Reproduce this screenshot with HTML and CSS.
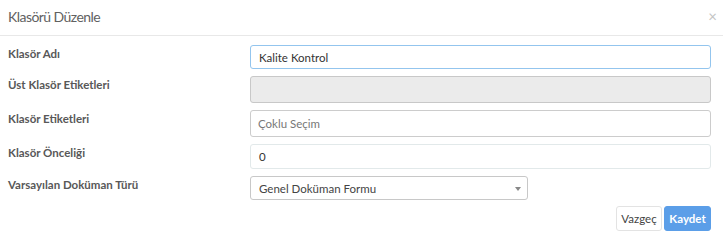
FILE: index.html
```html
<!DOCTYPE html>
<html lang="tr">
<head>
<meta charset="utf-8">
<link rel="stylesheet" href="styles.css">
</head>
<body>
<div class="modal">
  <div class="modal-header">
    <span class="modal-title">Klasörü Düzenle</span>
    <span class="close">×</span>
  </div>
  <div class="modal-body">
    <div class="form-grid">
      <label class="lbl">Klasör Adı</label>
      <div class="field"><div class="input input-focus">Kalite Kontrol</div></div>
      <label class="lbl">Üst Klasör Etiketleri</label>
      <div class="field"><div class="input input-disabled"></div></div>
      <label class="lbl">Klasör Etiketleri</label>
      <div class="field"><div class="input input-tags"><span class="placeholder">Çoklu Seçim</span></div></div>
      <label class="lbl">Klasör Önceliği</label>
      <div class="field"><div class="input input-light">0</div></div>
      <label class="lbl">Varsayılan Doküman Türü</label>
      <div class="field"><div class="input select">Genel Doküman Formu<span class="caret"></span></div></div>
    </div>
    <div class="actions">
      <button class="btn btn-default">Vazgeç</button>
      <button class="btn btn-primary">Kaydet</button>
    </div>
  </div>
</div>
</body>
</html>
```
FILE: styles.css
```css
* { box-sizing: border-box; }
html, body { margin: 0; padding: 0; background: #fff; }
body { font-family: "Lato", "Open Sans", sans-serif; color: #555; }
.modal { width: 723px; }
.modal-header {
  height: 36px;
  border-bottom: 1px solid #e8e8e8;
  display: flex;
  align-items: center;
  justify-content: space-between;
  padding: 0 6px 2px 8px;
}
.modal-title { font-size: 14px; color: #616161; letter-spacing: -0.55px; }
.close { font-size: 15px; color: #c4c4c4; line-height: 1; }
.modal-body { padding: 9px 12px 0 8px; }
.form-grid {
  display: grid;
  grid-template-columns: 242px 1fr;
  row-gap: 7px;
  align-items: start;
}
.lbl {
  font-size: 11.5px;
  font-weight: 700;
  color: #585858;
  line-height: 18px;
}
.field { display: flex; }
.input {
  width: 100%;
  border: 1px solid #cfcfcf;
  border-radius: 3px;
  font-size: 11.5px;
  color: #333;
  padding: 0 8px;
  display: flex;
  align-items: center;
}
.input-focus { height: 24px; border-color: #93c5ee; }
.input-disabled { height: 27px; background: #ebebeb; border-color: #c8c8c8; }
.input-tags { height: 27px; border-color: #cccccc; padding-left: 7px; }
.placeholder { color: #777; }
.input-light { height: 25px; border-color: #e2e9ea; }
.select {
  width: 278px;
  height: 24px;
  border-color: #c8c8c8;
  color: #444;
  justify-content: space-between;
  padding-right: 6px;
}
.caret {
  width: 0; height: 0;
  border-left: 3.5px solid transparent;
  border-right: 3.5px solid transparent;
  border-top: 4px solid #888;
  margin-top: 1px;
}
.actions {
  display: flex;
  justify-content: flex-end;
  gap: 2px;
  margin-top: 6px;
}
.btn {
  height: 25px;
  font-family: inherit;
  font-size: 11.5px;
  border-radius: 3px;
  padding: 0;
  cursor: pointer;
}
.btn-default { width: 46px; background: #fff; border: 1px solid #e3e3e3; color: #444; }
.btn-primary { width: 47px; background: #5b9ee8; border: 1px solid #5b9ee8; color: #fff; font-weight: 700; }
```
